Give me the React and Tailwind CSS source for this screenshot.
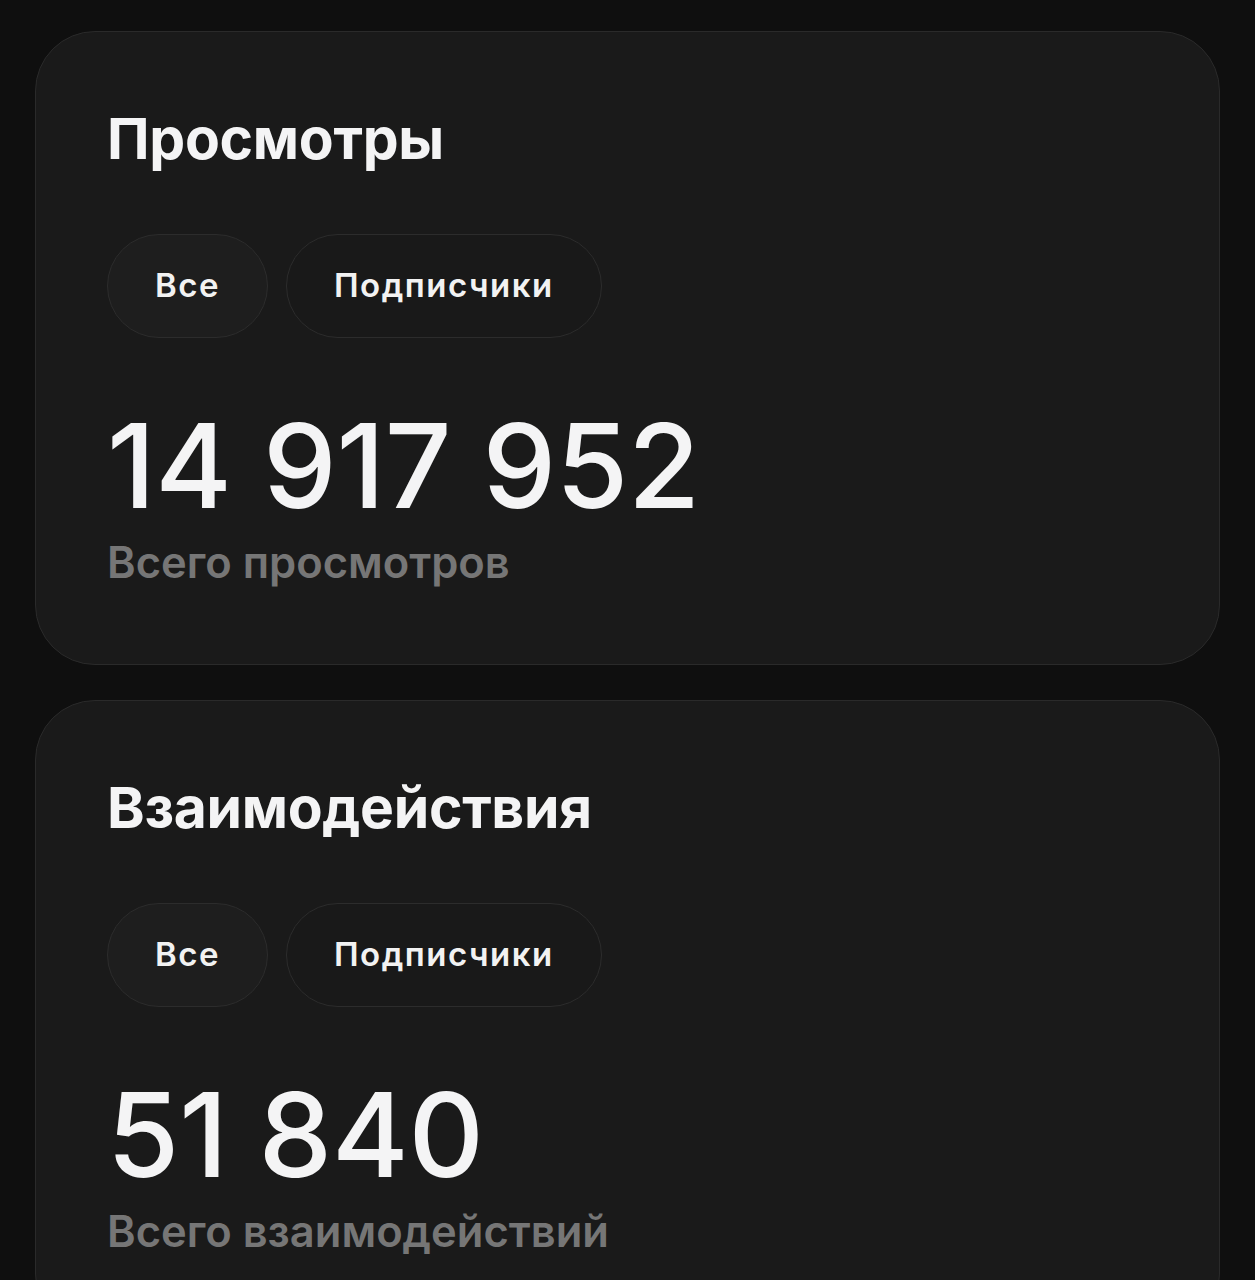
import React, { useState } from "react";

const sections = [
  { id: "views", title: "Просмотры", value: "14 917 952", caption: "Всего просмотров" },
  { id: "engagement", title: "Взаимодействия", value: "51 840", caption: "Всего взаимодействий" },
];

const filters = ["Все", "Подписчики"];

const StatCard = ({ section }) => {
  const [active, setActive] = useState("Все");

  return (
    <div className="rounded-[60px] border border-[#2a2a2a] bg-[#1a1a1a] px-[71px] pt-[72px] pb-[80px]">
      {/* Title */}
      <h2 className="text-[57px] leading-[70px] font-bold tracking-[-0.3px] text-[#f4f4f5]">
        {section.title}
      </h2>

      {/* Filters */}
      <div className="mt-[60px] flex gap-[18px]">
        {filters.map((f) => (
          <button
            key={f}
            onClick={() => setActive(f)}
            className={`h-[104px] rounded-full border border-[#2c2c2c] px-[47px] text-[33px] font-semibold tracking-[1.5px] text-[#f2f2f2] ${
              active === f ? "bg-[#1e1e1e]" : "bg-[#191919]"
            }`}
          >
            {f}
          </button>
        ))}
      </div>

      {/* Value */}
      <div className="mt-[69px] text-[117px] leading-[117px] font-medium tracking-[-0.2px] text-[#f4f4f5]">
        {section.value}
      </div>
      <div className="mt-[16px] text-[43.5px] leading-[44px] font-semibold text-[#767676]">
        {section.caption}
      </div>
    </div>
  );
};

export default function App() {
  return (
    <div className="min-h-screen bg-[#0f0f0f] px-[35px] pt-[31px] pb-10 font-['Inter',sans-serif]">
      <div className="flex flex-col gap-[35px]">
        {sections.map((s) => (
          <StatCard key={s.id} section={s} />
        ))}
      </div>
    </div>
  );
}
